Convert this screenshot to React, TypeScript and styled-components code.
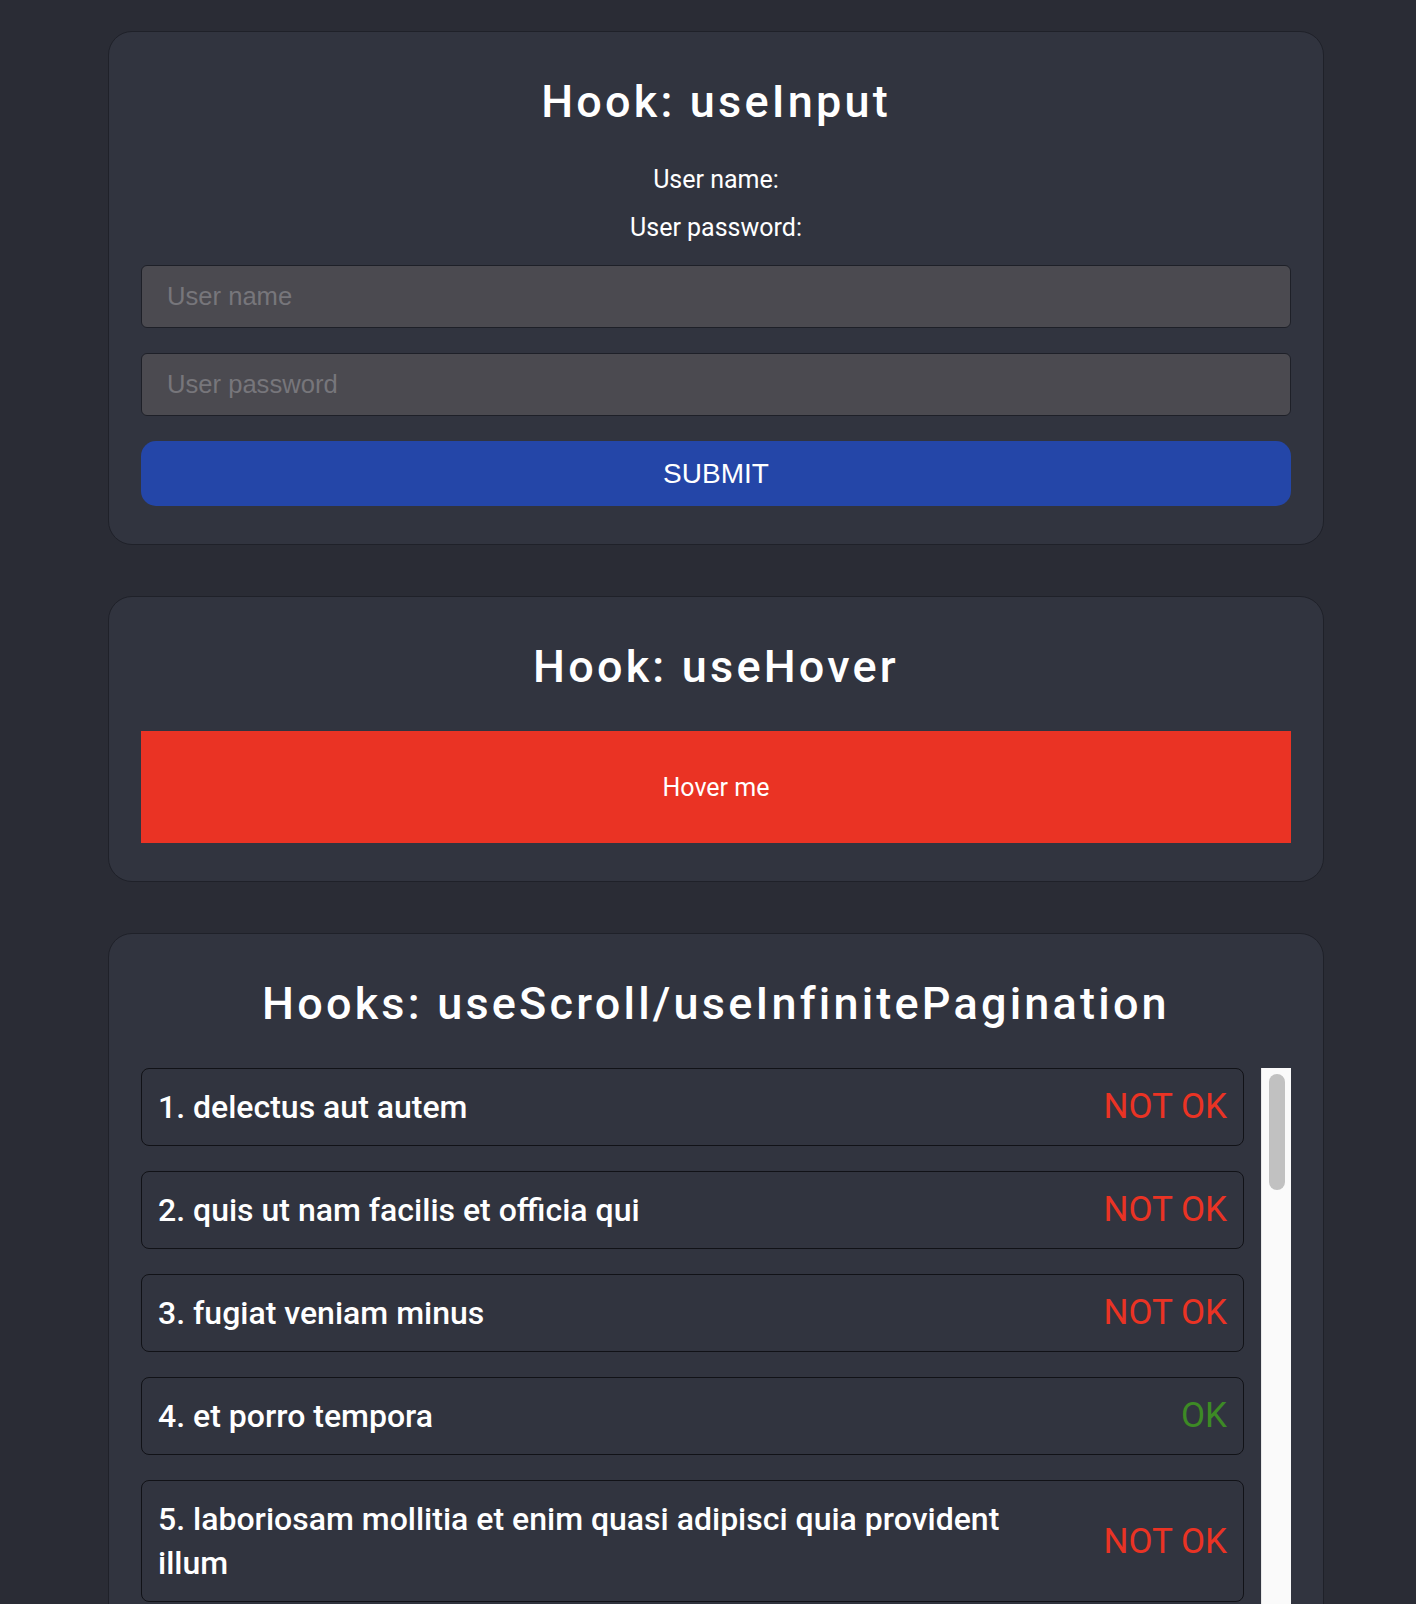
import styled, { createGlobalStyle } from 'styled-components';

interface Todo {
  id: number;
  title: string;
  completed: boolean;
}

const todos: Todo[] = [
  { id: 1, title: 'delectus aut autem', completed: false },
  { id: 2, title: 'quis ut nam facilis et officia qui', completed: false },
  { id: 3, title: 'fugiat veniam minus', completed: false },
  { id: 4, title: 'et porro tempora', completed: true },
  { id: 5, title: 'laboriosam mollitia et enim quasi adipisci quia provident illum', completed: false },
  { id: 6, title: 'qui ullam ratione quibusdam voluptatem quia omnis', completed: false },
  { id: 7, title: 'illo expedita consequatur quia in', completed: false },
  { id: 8, title: 'quo adipisci enim quam ut ab', completed: true },
  { id: 9, title: 'molestiae perspiciatis ipsa', completed: false },
  { id: 10, title: 'illo est ratione doloremque quia maiores aut', completed: true },
];

function App() {
  return <>
    <GlobalStyle />
    <Page>
      <Card>
        <Title>Hook: useInput</Title>
        <Label>User name:</Label>
        <Label $top={20}>User password:</Label>
        <Form onSubmit={(e) => e.preventDefault()}>
          <Input type="text" placeholder="User name" />
          <Input type="password" placeholder="User password" />
          <SubmitButton type="submit">SUBMIT</SubmitButton>
        </Form>
      </Card>

      <Card>
        <Title>Hook: useHover</Title>
        <HoverBox>Hover me</HoverBox>
      </Card>

      <Card>
        <Title>Hooks: useScroll/useInfinitePagination</Title>
        <ScrollArea>
          <TodoList>
            {todos.map((todo) => (
              <TodoRow key={todo.id}>
                <TodoTitle>{todo.id}. {todo.title}</TodoTitle>
                <Status $ok={todo.completed}>{todo.completed ? 'OK' : 'NOT OK'}</Status>
              </TodoRow>
            ))}
          </TodoList>
          {/* headless shots hide native scrollbars, so the bar is drawn by hand */}
          <ScrollTrack>
            <ScrollThumb />
          </ScrollTrack>
        </ScrollArea>
      </Card>
    </Page>
  </>
}
export default App;

const GlobalStyle = createGlobalStyle`
  html, body {
    margin: 0;
    background: #2a2c35;
  }
  body {
    font-family: Roboto, "Noto Sans", sans-serif;
    color: #ffffff;
  }
  * {
    box-sizing: border-box;
  }
`;

const Page = styled.div`
  display: flex;
  flex-direction: column;
  gap: 51px;
  padding: 31px 0 0 108px;
`;

const Card = styled.section`
  width: 1216px;
  background: #31343f;
  border: 1px solid #1f2129;
  border-radius: 24px;
  padding: 32px 32px 38px;
`;

const Title = styled.h2`
  margin: 12px 0 38px;
  font-size: 45px;
  font-weight: 500;
  line-height: 52px;
  letter-spacing: 3.2px;
  text-align: center;
  color: #ffffff;
`;

const Label = styled.p<{ $top?: number }>`
  margin: ${(props) => props.$top || 0}px 0 0;
  font-size: 25px;
  line-height: 28px;
  text-align: center;
`;

const Form = styled.form`
  display: flex;
  flex-direction: column;
  gap: 25px;
  margin-top: 23px;
`;

const Input = styled.input`
  height: 63px;
  padding: 0 25px;
  background: #4b4a50;
  border: 1px solid #1e2028;
  border-radius: 6px;
  font-family: "Liberation Sans", Arial, sans-serif;
  font-size: 25.6px;
  color: #ffffff;
  outline: none;
  &::placeholder {
    color: #77767b;
  }
`;

const SubmitButton = styled.button`
  height: 65px;
  background: #2446a8;
  border: none;
  border-radius: 15px;
  font-family: "Liberation Sans", Arial, sans-serif;
  font-size: 28px;
  color: #ffffff;
  cursor: pointer;
`;

const HoverBox = styled.div`
  display: flex;
  align-items: center;
  justify-content: center;
  height: 112px;
  background: #ea3324;
  font-size: 25px;
  color: #ffffff;
`;

const ScrollArea = styled.div`
  display: flex;
  height: 640px;
`;

const TodoList = styled.div`
  flex: 1;
  min-width: 0;
  overflow: hidden;
  padding-right: 17px;
`;

const ScrollTrack = styled.div`
  flex-shrink: 0;
  width: 30px;
  padding: 6px 6px 0 7px;
  background: #fafafa;
  border-left: 1px solid #e8e8e8;
`;

const ScrollThumb = styled.div`
  height: 116px;
  border-radius: 8px;
  background: #c1c1c1;
`;

const TodoRow = styled.div`
  display: flex;
  align-items: center;
  justify-content: space-between;
  gap: 40px;
  margin-bottom: 25.5px;
  padding: 15.5px 16px;
  border: 1px solid #111217;
  border-radius: 8px;
  background: #31343f;
`;

const TodoTitle = styled.div`
  font-size: 32px;
  font-weight: 500;
  line-height: 44.5px;
  color: #ffffff;
`;

const Status = styled.div<{ $ok: boolean }>`
  flex-shrink: 0;
  font-size: 35px;
  line-height: 41px;
  color: ${(props) => (props.$ok ? '#3d8a25' : '#ea3324')};
`;
